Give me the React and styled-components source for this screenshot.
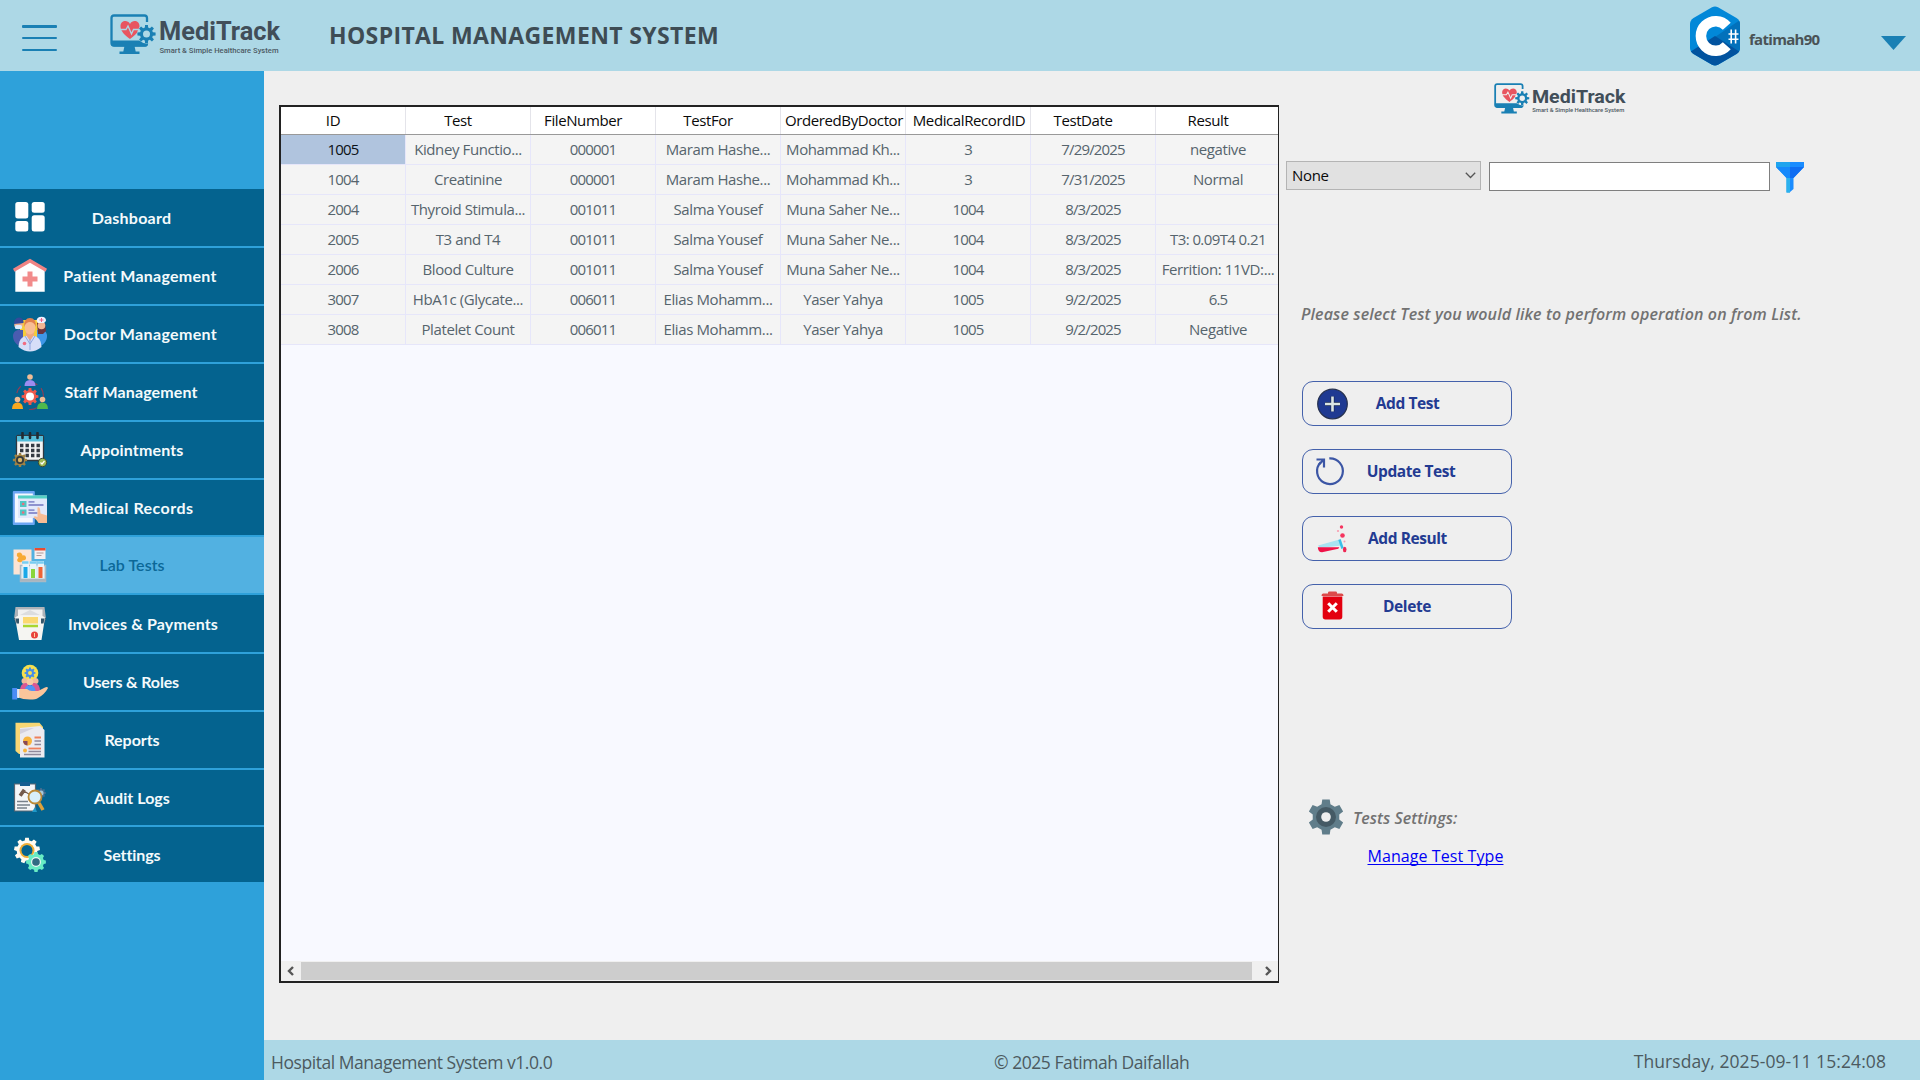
import React from "react";
import styled, { createGlobalStyle } from "styled-components";

const Global = createGlobalStyle`
  * { box-sizing: border-box; }
  body { margin: 0; background: #f0f0f0; font-family: "Open Sans", "Noto Sans", sans-serif; overflow: hidden; }
`;

const Page = styled.div`
  display: grid;
  grid-template: 71px 969px 40px / 264px 1fr;
  width: 1920px;
  height: 1080px;
  background: #efefef;
`;

const Header = styled.header`
  grid-column: 1 / -1;
  display: flex;
  align-items: flex-start;
  background: #add8e6;
`;

const MenuButton = styled.div`
  display: flex;
  flex-direction: column;
  gap: 9.3px;
  width: 35px;
  margin: 25px 53px 0 22px;
`;

const MenuLine = styled.span`
  height: 2.5px;
  border-radius: 1px;
  background: #1a80b4;
`;

const HeaderLogo = styled.div`
  height: 42px;
  margin-top: 14px;
`;

const Title = styled.h1`
  flex: 1;
  margin: 19px 0 0 47px;
  font-size: 23px;
  font-weight: 700;
  line-height: 32px;
  letter-spacing: 0.36px;
  color: #3e4c54;
`;

const Account = styled.div`
  display: flex;
  align-items: center;
  height: 71px;
  margin-right: 14px;
`;

const UserName = styled.span`
  width: 132px;
  margin: 6px 0 0 9px;
  font-size: 15px;
  font-weight: 700;
  letter-spacing: -0.7px;
  line-height: 22px;
  color: #4a5356;
`;

const Caret = styled.span`
  width: 25px;
  height: 14px;
  margin-top: 15px;
  background: #1a80b4;
  clip-path: polygon(0 0, 100% 0, 50% 100%);
`;

const Sidebar = styled.nav`
  grid-row: 2 / 4;
  display: flex;
  flex-direction: column;
  gap: 2px;
  padding-top: 118px;
  background: #2ea1da;
`;

const NavItem = styled.div`
  display: flex;
  align-items: center;
  height: ${(p) => p.$height}px;
  padding: 0 ${(p) => p.$end}px 0 12px;
  background: ${(p) => (p.$active ? "#52b1e1" : "#04638f")};
  color: ${(p) => (p.$active ? "#0b6898" : "#f4fafc")};
`;

const NavIcon = styled.svg`
  flex: none;
  width: 36px;
  height: 36px;
`;

const NavLabel = styled.span`
  flex: 1;
  margin-left: 11px;
  font-family: Lato, "Open Sans", sans-serif;
  font-size: 16px;
  font-weight: ${(p) => (p.$active ? 600 : 700)};
  letter-spacing: ${(p) => p.$spacing || 0.25}px;
  line-height: 22px;
  text-align: center;
  white-space: nowrap;
`;

const Main = styled.main`
  display: flex;
  align-items: flex-start;
  padding: 34px 0 0 15px;
`;

const DataGrid = styled.section`
  display: flex;
  flex-direction: column;
  width: 1000px;
  height: 877.5px;
  border: 2px solid #222;
  border-right-width: 1.5px;
  background: #f8f9ff;
`;

const GridRow = styled.div`
  display: grid;
  grid-template-columns: repeat(8, 125px);
  width: 100%;
  overflow: hidden;
`;

const HeadRow = styled(GridRow)`
  height: 28px;
  background: #fff;
  border-bottom: 1px solid #999;
`;

const HeadCell = styled.div`
  padding: ${(p) => (p.$wide ? "0 0 0 2px" : "0 20px 0 0")};
  border-right: 1px solid #e4e4ea;
  font-size: 15px;
  letter-spacing: -0.4px;
  line-height: 27px;
  text-align: center;
  white-space: nowrap;
  color: #0a0a0a;
`;

const BodyRow = styled(GridRow)`
  height: 30px;
  background: #f4f4f4;
`;

const cellSpacing = { text: -0.4, number: -0.85, mixed: -0.6 };

const Cell = styled.div`
  height: 30px;
  border-right: 1px solid #e6e6fa;
  border-bottom: 1px solid #e6e6fa;
  background: ${(p) => (p.$selected ? "#b0c4de" : "transparent")};
  color: ${(p) => (p.$selected ? "#0c1116" : "#56646d")};
  font-size: 15px;
  letter-spacing: ${(p) => cellSpacing[p.$kind]}px;
  line-height: 29px;
  text-align: center;
  white-space: nowrap;
`;

const ScrollBar = styled.div`
  display: flex;
  align-items: center;
  height: 20px;
  margin-top: auto;
  background: #f0f0f0;
`;

const ScrollArrow = styled.svg`
  flex: none;
  width: ${(p) => p.$width}px;
  height: 20px;
  fill: none;
  stroke: #555;
  stroke-width: 2.4;
`;

const ScrollThumb = styled.div`
  flex: 1;
  height: 18px;
  background: #cdcdcd;
`;

const Panel = styled.aside`
  display: flex;
  flex-direction: column;
  align-items: flex-start;
  margin: -22px 0 0 7px;
`;

const PanelLogo = styled.div`
  height: 32px;
  margin-left: 208px;
`;

const FilterRow = styled.div`
  display: flex;
  align-items: flex-start;
  height: 32px;
  margin-top: 46px;
`;

const Select = styled.div`
  display: flex;
  align-items: center;
  justify-content: space-between;
  width: 195px;
  height: 29px;
  padding: 0 4px 1px 5px;
  border: 1px solid #b4b4b4;
  background: #e1e1e1;
  font-size: 15px;
  letter-spacing: -0.3px;
  color: #0a0a0a;
`;

const TextInput = styled.input`
  width: 281px;
  height: 29px;
  margin: 1px 5px 0 8px;
  padding: 0 4px;
  border: 1px solid #7f7f7f;
  border-radius: 0;
  background: #fff;
  outline: none;
`;

const Hint = styled.p`
  margin: 110px 0 0 15px;
  font-size: 16px;
  font-weight: 600;
  font-style: italic;
  letter-spacing: 0.13px;
  line-height: 22px;
  white-space: nowrap;
  color: #727272;
`;

const Actions = styled.div`
  display: flex;
  flex-direction: column;
  gap: 22.5px;
  margin: 56px 0 0 16px;
`;

const ActionButton = styled.button`
  display: flex;
  align-items: center;
  width: 210px;
  height: 45px;
  padding: 0 ${(p) => p.$end}px 0 11px;
  border: 1.5px solid #4461ab;
  border-radius: 11px;
  background: transparent;
  color: #233b92;
  font-family: "Open Sans", sans-serif;
  font-size: 15.5px;
  font-weight: 700;
  letter-spacing: -0.42px;
`;

const ActionIcon = styled.svg`
  flex: none;
  width: 36px;
  height: 36px;
`;

const ActionLabel = styled.span`
  flex: 1;
  margin-top: -1px;
  text-align: center;
  white-space: nowrap;
`;

const SettingsRow = styled.div`
  display: flex;
  align-items: center;
  gap: 9px;
  margin: 170px 0 0 22px;
`;

const SettingsTitle = styled.span`
  margin-top: 2px;
  font-size: 16px;
  font-weight: 600;
  font-style: italic;
  letter-spacing: 0.05px;
  line-height: 22px;
  color: #727272;
`;

const SettingsLink = styled.a`
  margin: 10px 0 0 81.5px;
  font-size: 16px;
  font-weight: 500;
  letter-spacing: 0.08px;
  line-height: 22px;
  color: #0000f5;
  text-decoration: underline;
  text-decoration-thickness: 1px;
  text-decoration-skip-ink: none;
  text-underline-offset: 2px;
`;

const Footer = styled.footer`
  display: grid;
  grid-template-columns: 723px 1fr auto;
  align-items: center;
  padding: 4px 34px 0 7px;
  background: #add8e6;
  font-size: 17.5px;
  letter-spacing: -0.45px;
  color: #4c5a60;
`;

const Clock = styled.span`
  margin-top: -3px;
  letter-spacing: 0.08px;
`;

const toothedRing = (cx, cy, outer, inner, teeth) => {
  const points = [];
  for (let i = 0; i < teeth; i += 1) {
    [[-0.32, inner], [-0.2, outer], [0.2, outer], [0.32, inner]].forEach(([shift, r]) => {
      const a = ((i + shift) / teeth) * Math.PI * 2 - Math.PI / 2;
      points.push(`${(cx + Math.cos(a) * r).toFixed(2)},${(cy + Math.sin(a) * r).toFixed(2)}`);
    });
  }
  return points.join(" ");
};

const Gear = ({ cx, cy, r, inner, hole, teeth = 8, color, center }) => (
  <g>
    <polygon points={toothedRing(cx, cy, r, inner || r * 0.75, teeth)} fill={color} />
    <circle cx={cx} cy={cy} r={hole} fill={center} />
  </g>
);

const LogoArt = styled.svg`
  display: block;
  overflow: visible;
`;

const MediTrackLogo = ({ width, height, background }) => (
  <LogoArt width={width} height={height} viewBox="0 0 172 42" preserveAspectRatio="none">
    <path d="M37 8V4q0-2.500-2.500-2.500H4Q1.500 1.500 1.500 4v25q0 2.500 2.500 2.500h31.500q1.500 0 1.500-2.500" fill="none" stroke="#1a80b4" strokeWidth="2.300" />
    <path d="M1 26.500h37V29q0 3.500-3.500 3.500H4.500Q1 32.500 1 29zM14.500 32h10l1.200 5.500h3.800V40h-20v-2.500h3.800z" fill="#1a80b4" />
    <path d="M20 25C14.500 21 10.500 17 10.500 12.200c0-5.700 7-6.900 9.500-2.200 2.500-4.700 9.500-3.500 9.500 2.200C29.500 17 25.500 21 20 25z" fill="#e85560" />
    <path d="M10 15.500h6l2-3.500 3.500 8 2-4.500h6" fill="none" stroke={background} strokeWidth="1.300" />
    <circle cx="36.500" cy="20" r="9.500" fill={background} />
    <Gear cx={36.5} cy={20} r={9.2} inner={6.6} hole={3.5} color="#1a80b4" center={background} />
    <text x="49" y="25.700" textLength="121" lengthAdjust="spacingAndGlyphs" fontFamily="Roboto, sans-serif" fontWeight="700" fontSize="25" fill="#414e59">MediTrack</text>
    <text x="49.500" y="38.700" textLength="119" lengthAdjust="spacingAndGlyphs" fontFamily="Roboto, sans-serif" fontWeight="500" fontSize="8" fill="#4c5963">Smart &amp; Simple Healthcare System</text>
  </LogoArt>
);

const CSharpBadge = () => (
  <svg width="50" height="60" viewBox="0 0 50 60">
    <defs>
      <clipPath id="hexagon">
        <path d="M22 1.200q3-1.600 6 0L46.500 12Q50 14.500 50 18v24q0 3.500-3.500 6L28 58.800q-3 1.600-6 0L3.500 48Q0 45.500 0 42V18q0-3.500 3.500-6z" />
      </clipPath>
    </defs>
    <g clipPath="url(#hexagon)">
      <rect width="50" height="60" fill="#0288d8" />
      <path d="M25 31L50 14v34z" fill="#0271bb" />
      <path d="M25 30L0 46v14h50V46z" fill="#02539f" />
      <path d="M36.800 20.200A14.800 14.800 0 1 0 36.800 39.800" fill="none" stroke="#fff" strokeWidth="10.500" />
      <path d="M41.200 23.500v14M45.600 23.500v14M38.500 28h10M38.500 33.200h10" stroke="#fff" strokeWidth="1.600" />
    </g>
  </svg>
);

const icons = {
  dashboard: (
    <g fill="#fff">
      <rect x="3.300" y="2" width="13" height="16.500" rx="2.500" />
      <rect x="3.300" y="21" width="13" height="10.500" rx="2.500" />
      <rect x="19.700" y="2" width="13" height="10.800" rx="2.500" />
      <rect x="19.700" y="15.200" width="13" height="16.300" rx="2.500" />
    </g>
  ),
  patient: (
    <g>
      <path d="M3.300 12L18 3l14.700 9v21.700H3.300z" fill="#fff" />
      <path d="M18 .8L35 10.800l-1.500 3L18 4.800 2.500 13.800 1 10.800z" fill="#f08484" />
      <path d="M15.500 13.500h5v5h5v5h-5v5h-5v-5h-5v-5h5z" fill="#f28b8b" />
    </g>
  ),
  doctor: (
    <g>
      <path d="M8 4h20v18H8z" fill="#f5cc3a" />
      <path d="M1 20c0-4 3-6 6-6h4v18C4 29 1 25 1 20z" fill="#4a5cb0" />
      <path d="M35 20c0-4-3-6-6-6h-4v18c7-3 10-7 10-12z" fill="#3f97e8" />
      <circle cx="6.500" cy="9" r="4.300" fill="#efb08f" />
      <path d="M2 8q0-6 5-6.500Q12 2 11.500 7z" fill="#354a9a" />
      <rect x="3" y="9" width="7" height="4" rx="1.500" fill="#dcecff" />
      <path d="M25 7q4-3 8 0l1 8-3 3h-5z" fill="#6b3440" />
      <circle cx="29.500" cy="9.500" r="3.800" fill="#f3b593" />
      <path d="M24.500 5Q25 .8 29.500.8T34 5l-2 2h-6z" fill="#eef2ff" />
      <path d="M29.500 2v4M27.500 4h4" stroke="#ef5f86" />
      <path d="M6.500 31C7 22 11 19.500 18 19.500S29 22 29.500 31Q18 40 6.500 31z" fill="#d6def8" />
      <path d="M14 19l4 6 4-6v-3h-8z" fill="#f0a77f" />
      <path d="M18 23v11M13 20l5 8 5-8" stroke="#8fa6df" fill="none" />
      <ellipse cx="18" cy="11.500" rx="5.300" ry="7" fill="#f8bd94" />
      <path d="M12 11q0-9 6-9t6 9q-2-5-6-5t-6 5z" fill="#e2804f" />
      <circle cx="12.500" cy="27.500" r="1.800" fill="#f26c81" />
    </g>
  ),
  staff: (
    <g>
      <circle cx="18" cy="22" r="13.500" fill="none" stroke="#8d3e57" strokeWidth="1.200" strokeDasharray="9 5 8 9" />
      <Gear cx={18} cy={22.5} r={8.5} hole={4} color="#ee5a4c" center="#fff" />
      <circle cx="18" cy="3" r="2.800" fill="#f0bd96" />
      <path d="M12.500 12q0-6 5.500-6t5.500 6z" fill="#9b8cf0" />
      <circle cx="5.500" cy="25.500" r="2.800" fill="#f0bd96" />
      <path d="M0 35q0-6.500 5.500-6.500T11 35z" fill="#f8a91f" />
      <circle cx="30.500" cy="25.500" r="2.800" fill="#f0bd96" />
      <path d="M25 35q0-6.500 5.500-6.500T36 35z" fill="#50b94c" />
    </g>
  ),
  appointments: (
    <g>
      <rect x="4.500" y="3.500" width="27" height="25" rx="1.500" fill="#f4f4f4" stroke="#303840" strokeWidth="1.300" />
      <path d="M5 4h26v5.500H5z" fill="#54bdd9" />
      <path d="M10.500 1v5M18 1v5M25.500 1v5" stroke="#222b32" strokeWidth="2.600" strokeLinecap="round" />
      <path d="M8 13.500h20M8 18.500h20M13.500 23.500h14.500" stroke="#343a42" strokeWidth="3.300" strokeDasharray="3.400 2.100" />
      <Gear cx={8} cy={28} r={7.2} hole={4} color="#a18344" center="#343b3f" />
      <circle cx="8" cy="28" r="2.200" fill="#d8b66a" />
      <circle cx="30.500" cy="30.500" r="4.200" fill="#9cb855" stroke="#3a4934" />
      <path d="M28.500 30.500l1.500 1.500 2.500-3" fill="none" stroke="#fff" strokeWidth="1.200" />
    </g>
  ),
  records: (
    <g>
      <rect x=".8" y="1" width="22" height="34" rx="1" fill="#6ba6f4" />
      <rect x="2.800" y="3.500" width="18" height="29" fill="#f4f8ff" />
      <rect x="6" y="5.500" width="29" height="22.500" fill="#e2e9fb" />
      <rect x="6" y="5.500" width="29" height="3" fill="#55d0c4" />
      <rect x="8" y="11" width="6.500" height="6" fill="#51c7c6" />
      <rect x="8" y="19.500" width="6.500" height="6" fill="#51c7c6" />
      <circle cx="11.200" cy="14" r="1.300" fill="#ec6c7c" />
      <circle cx="11.200" cy="22.500" r="1.300" fill="#ec6c7c" />
      <path d="M16.500 11.800h6M16.500 15h15M16.500 20.200h6M16.500 23h9" stroke="#8d92cf" strokeWidth="1.800" />
      <path d="M25.500 17.500q2-1 2.500 1.500l.5 4.500 6.500 2V33h-8.500q-1.500-3-5-5.500.5-2 4-.5z" fill="#f6bc95" />
    </g>
  ),
  lab: (
    <g>
      <path d="M1.500 2.500h18v25h-18z" fill="#fde4d4" />
      <path d="M5 6.500q3-2 5 .5l.5 1.500q3-1 3.500 2t-3.500 3l-1 1.500q-4 1-4.500-2l1.500-2.500q-2.500-2-1.500-4z" fill="#f8a933" />
      <rect x="22.500" y="1" width="11" height="11" fill="#f4eff0" />
      <path d="M22.500 1h11v2.500h-11z" fill="#e84d32" />
      <path d="M24.500 6h7M24.500 8.500h5" stroke="#ae9898" />
      <rect x="8.500" y="18.500" width="25" height="16" fill="#dce7ee" stroke="#a9bbc6" strokeWidth="1.500" />
      <path d="M10.500 14h6.500v17h-6.500zM18 14h6.500v17H18zM25.500 14H32v17h-6.500z" fill="#e9f4fa" />
      <path d="M13.500 20v11" stroke="#1aa8e8" strokeWidth="4" />
      <path d="M21 22v9" stroke="#8ad53c" strokeWidth="4" />
      <path d="M28.500 20v11" stroke="#f06436" strokeWidth="4" />
      <path d="M10 15.500h6.500M17.700 15.500h6.500M25.300 15.500h6.500" stroke="#79cdf1" strokeWidth="2.400" />
      <path d="M8 33h26" stroke="#aab4bd" strokeWidth="2.500" />
    </g>
  ),
  invoices: (
    <g>
      <path d="M3.500 1h29l1.500 12-3 3H5L2 13z" fill="#aeb3b8" />
      <path d="M6 3.500h24.500V13H6z" fill="#f1f1f1" />
      <path d="M8 9l10-5 10 5z" fill="#dcdddf" />
      <path d="M2 12l5-1 1 6-4 2zM34 12l-5-1-1 6 4 2z" fill="#34566b" />
      <path d="M3 11.500q3-2.500 5-1.500h20q2-1 5 1.500l-3.500 22.500H7z" fill="#f5f5f2" />
      <path d="M3.500 12.500h3.500v5H4.500zM32.500 12.500H29v5h2.500z" fill="#34566b" />
      <path d="M11 11h15v6.500H11z" fill="#fbd871" />
      <path d="M11 20h15" stroke="#a9d62f" strokeWidth="2.500" />
      <circle cx="22.500" cy="29" r="3.500" fill="#e8433c" />
      <path d="M22.500 27v4" stroke="#ffd2a0" />
    </g>
  ),
  users: (
    <g>
      <circle cx="18" cy="9" r="8.300" fill="#f5df4f" />
      <Gear cx={18} cy={9} r={5.5} hole={2} color="#448dea" center="#f5df4f" />
      <circle cx="12.500" cy="17" r="3" fill="#f1ba99" />
      <circle cx="23.500" cy="17" r="3" fill="#f1ba99" />
      <path d="M8 27q0-7 5-8h3v9zM28 27q0-7-5-8h-3v9z" fill="#da5893" />
      <circle cx="18" cy="18" r="3.300" fill="#f8c9a4" />
      <path d="M12.500 28q0-7 5.500-7t5.500 7z" fill="#5094f5" />
      <path d="M5 25h10q2 2 5 2h6l7-3.500q2.500-1 3 .5-3 6-10 10-2 1.500-8 1.500-7 0-13-2.500z" fill="#fbc59b" />
      <path d="M.2 24h5v11.500h-5z" fill="#4b8cf5" />
      <path d="M5.200 25h2v9h-2z" fill="#dce8ff" />
    </g>
  ),
  reports: (
    <g>
      <path d="M3.500.8h24L31 5v27H7l-3.500-3z" fill="#f8d774" />
      <path d="M8 6l20-2 4.500 4v27.500H8z" fill="#ecebf0" />
      <path d="M8 12l14-6-14 1z" fill="#d4d1dd" />
      <circle cx="15.500" cy="19" r="4.500" fill="#f8b43c" />
      <path d="M15.500 19H11q.5 4 4.500 4.500z" fill="#894956" />
      <path d="M22.500 15.500H29" stroke="#ef805c" strokeWidth="2" />
      <path d="M22.500 19H29M22.500 22.500H29M16.500 29.500H29M12 32.500h17" stroke="#8f899b" strokeWidth="1.600" />
      <path d="M16.500 26.500H29" stroke="#ef805c" strokeWidth="1.800" />
      <circle cx="13" cy="28.500" r="2" fill="#f8b43c" />
    </g>
  ),
  audit: (
    <g>
      <path d="M2.500 4h21v27h-21z" fill="#f4f6f8" stroke="#596672" strokeWidth="1.200" />
      <path d="M8 2h10v4H8z" fill="#165e91" />
      <path d="M7.500 14.500l3.500-5 2 1.500-3.500 5zM12 11l8 5" stroke="#745a4d" strokeWidth="1.200" fill="#745a4d" />
      <path d="M5 21.500h11M5 25h13M5 28h10" stroke="#77818a" strokeWidth="1.300" />
      <Gear cx={29} cy={13} r={5} hole={2.5} color="#496f91" center="#a5c8dc" />
      <circle cx="23" cy="17" r="6.500" fill="#d8effa" stroke="#bb8937" strokeWidth="1.800" />
      <path d="M27 23l4 7" stroke="#dda13c" strokeWidth="3.500" />
      <path d="M20 32l3-5 2 5z" fill="#1e98c8" />
    </g>
  ),
  settings: (
    <g>
      <Gear cx={15} cy={13.5} r={13} inner={10.3} hole={7.5} teeth={9} color="#fffaf0" center="#efad35" />
      <circle cx="15" cy="13.500" r="5.500" fill="#04638f" />
      <Gear cx={24} cy={25} r={10} inner={8} hole={5} color="#68ecc4" center="#e8f6f3" />
      <circle cx="24" cy="25" r="3.800" fill="#316c83" />
    </g>
  ),
  add: (
    <g>
      <circle cx="18.500" cy="18" r="14.800" fill="#1f3a92" stroke="#26314f" strokeWidth="1.200" />
      <path d="M18.500 10.500v15M11 18h15" stroke="#17274f" strokeWidth="4" />
      <path d="M18.500 10.500v15M11 18h15" stroke="#dbe6e4" strokeWidth="2.600" />
    </g>
  ),
  update: (
    <g fill="none" stroke="#3c56a5" strokeWidth="2.200">
      <path d="M15.300 5.300A12.900 12.900 0 1 1 6.700 9.200" />
      <path d="M2.500 6.500h7.500v8M9.800 6.500L5 11.500" />
    </g>
  ),
  result: (
    <g>
      <path d="M4 24.500L25.500 18.500l2 6L6 27z" fill="#a8e3f2" />
      <path d="M3.800 26.300h21.500l-1 1.500L8 31.300q-4 0-4.200-5z" fill="#ef1248" />
      <path d="M25.500 18.500l3 9" stroke="#3bbfe8" strokeWidth="2.500" />
      <circle cx="27.500" cy="6" r="1.700" fill="#f5355f" />
      <circle cx="28.500" cy="14.500" r="2.300" fill="#f5355f" />
      <circle cx="24" cy="10" r="1.100" fill="#f99cb0" />
      <circle cx="30.500" cy="20.500" r="1" fill="#f99cb0" />
      <ellipse cx="30.700" cy="28.500" rx="1.800" ry="2.800" fill="#ee2855" />
    </g>
  ),
  remove: (
    <g>
      <path d="M14 5.500V4.800q0-1.300 1.300-1.300h6.400q1.300 0 1.300 1.300v.7h5q1.500 0 1.500 2.500H7.500q0-2.500 1.500-2.500z" fill="#dc4a4a" />
      <path d="M8.700 8.500h19.600v20.300q0 2.700-2.700 2.700H11.400q-2.700 0-2.700-2.700z" fill="#e3000f" />
      <path d="M14.200 15.200l8.600 8.600M22.800 15.200l-8.600 8.600" stroke="#fff" strokeWidth="3" />
    </g>
  ),
};

const navItems = [
  { label: "Dashboard", icon: "dashboard", height: 57 },
  { label: "Patient Management", icon: "patient", height: 56, end: 43 },
  { label: "Doctor Management", icon: "doctor", height: 56, end: 42, spacing: 0.35 },
  { label: "Staff Management", icon: "staff", height: 56, end: 61, spacing: 0.12 },
  { label: "Appointments", icon: "appointments", height: 56, end: 59, spacing: 0.15 },
  { label: "Medical Records", icon: "records", height: 55, spacing: 0.45 },
  { label: "Lab Tests", icon: "lab", height: 56, end: 59, active: true, spacing: 0.05 },
  { label: "Invoices & Payments", icon: "invoices", height: 57, end: 37, spacing: 0.15 },
  { label: "Users & Roles", icon: "users", height: 56, end: 61, spacing: -0.15 },
  { label: "Reports", icon: "reports", height: 56, end: 59, spacing: -0.05 },
  { label: "Audit Logs", icon: "audit", height: 55, end: 59, spacing: 0.05 },
  { label: "Settings", icon: "settings", height: 55, end: 59, spacing: -0.1 },
];

const columns = ["ID", "Test", "FileNumber", "TestFor", "OrderedByDoctor", "MedicalRecordID", "TestDate", "Result"];

const rows = [
  ["1005", "Kidney Functio...", "000001", "Maram Hashe...", "Mohammad Kh...", "3", "7/29/2025", "negative"],
  ["1004", "Creatinine", "000001", "Maram Hashe...", "Mohammad Kh...", "3", "7/31/2025", "Normal"],
  ["2004", "Thyroid Stimula...", "001011", "Salma Yousef", "Muna Saher Ne...", "1004", "8/3/2025", ""],
  ["2005", "T3 and T4", "001011", "Salma Yousef", "Muna Saher Ne...", "1004", "8/3/2025", "T3: 0.09T4 0.21"],
  ["2006", "Blood Culture", "001011", "Salma Yousef", "Muna Saher Ne...", "1004", "8/3/2025", "Ferrition: 11VD:..."],
  ["3007", "HbA1c (Glycate...", "006011", "Elias Mohamm...", "Yaser Yahya", "1005", "9/2/2025", "6.5"],
  ["3008", "Platelet Count", "006011", "Elias Mohamm...", "Yaser Yahya", "1005", "9/2/2025", "Negative"],
];

const kindOf = (value) => {
  if (/^[\d./]+$/.test(value)) return "number";
  return value.includes("T3:") ? "mixed" : "text";
};

const actions = [
  { label: "Add Test", icon: "add", end: 46 },
  { label: "Update Test", icon: "update", end: 39 },
  { label: "Add Result", icon: "result", end: 46 },
  { label: "Delete", icon: "remove", end: 47 },
];

export default function App() {
  return (
    <Page>
      <Global />
      <Header>
        <MenuButton>
          <MenuLine />
          <MenuLine />
          <MenuLine />
        </MenuButton>
        <HeaderLogo>
          <MediTrackLogo width={172} height={42} background="#add8e6" />
        </HeaderLogo>
        <Title>HOSPITAL MANAGEMENT SYSTEM</Title>
        <Account>
          <CSharpBadge />
          <UserName>fatimah90</UserName>
          <Caret />
        </Account>
      </Header>

      <Sidebar>
        {navItems.map((item) => (
          <NavItem key={item.label} $height={item.height} $end={item.end || 60} $active={item.active}>
            <NavIcon viewBox="0 0 36 36">{icons[item.icon]}</NavIcon>
            <NavLabel $active={item.active} $spacing={item.spacing}>{item.label}</NavLabel>
          </NavItem>
        ))}
      </Sidebar>

      <Main>
        <DataGrid>
          <HeadRow>
            {columns.map((name) => (
              <HeadCell key={name} $wide={name.length > 12}>{name}</HeadCell>
            ))}
          </HeadRow>
          {rows.map((row, r) => (
            <BodyRow key={row[0]}>
              {row.map((value, c) => (
                <Cell key={columns[c]} $selected={r === 0 && c === 0} $kind={kindOf(value)}>
                  {value}
                </Cell>
              ))}
            </BodyRow>
          ))}
          <ScrollBar>
            <ScrollArrow $width={20} viewBox="0 0 20 20"><path d="M12 6L8 10l4 4" /></ScrollArrow>
            <ScrollThumb />
            <ScrollArrow $width={26} viewBox="0 0 26 20"><path d="M14 6l4 4-4 4" /></ScrollArrow>
          </ScrollBar>
        </DataGrid>

        <Panel>
          <PanelLogo>
            <MediTrackLogo width={133} height={32} background="#efefef" />
          </PanelLogo>
          <FilterRow>
            <Select>
              None
              <svg width="11" height="7" viewBox="0 0 11 7">
                <path d="M.8.800l4.700 4.700L10.200.800" fill="none" stroke="#555" strokeWidth="1.300" />
              </svg>
            </Select>
            <TextInput />
            <svg width="30" height="32" viewBox="0 0 30 32">
              <path d="M1 1h14v30.500h-3.500V17L1 6z" fill="#1fa4ee" />
              <path d="M11.500 17h3.500v14.500h-3.500z" fill="#2bb1ee" />
              <path d="M1 6h14v11h-3.500z" fill="#1689fb" />
              <path d="M15 1h14v5L18.500 17v11L15 31z" fill="#1a8cff" />
              <path d="M15 6h14L18.500 17H15z" fill="#0f6df2" />
            </svg>
          </FilterRow>
          <Hint>Please select Test you would like to perform operation on from List.</Hint>
          <Actions>
            {actions.map((action) => (
              <ActionButton key={action.label} $end={action.end}>
                <ActionIcon viewBox="0 0 36 36">{icons[action.icon]}</ActionIcon>
                <ActionLabel>{action.label}</ActionLabel>
              </ActionButton>
            ))}
          </Actions>
          <SettingsRow>
            <svg width="36" height="36" viewBox="0 0 36 36">
              <Gear cx={18} cy={18} r={18} inner={13.5} hole={10} teeth={6} color="#607d8a" center="#455a65" />
              <circle cx="18" cy="18" r="4.800" fill="#efefef" />
            </svg>
            <SettingsTitle>Tests Settings:</SettingsTitle>
          </SettingsRow>
          <SettingsLink>Manage Test Type</SettingsLink>
        </Panel>
      </Main>

      <Footer>
        <span>Hospital Management System v1.0.0</span>
        <span>© 2025 Fatimah Daifallah</span>
        <Clock>Thursday, 2025-09-11 15:24:08</Clock>
      </Footer>
    </Page>
  );
}
